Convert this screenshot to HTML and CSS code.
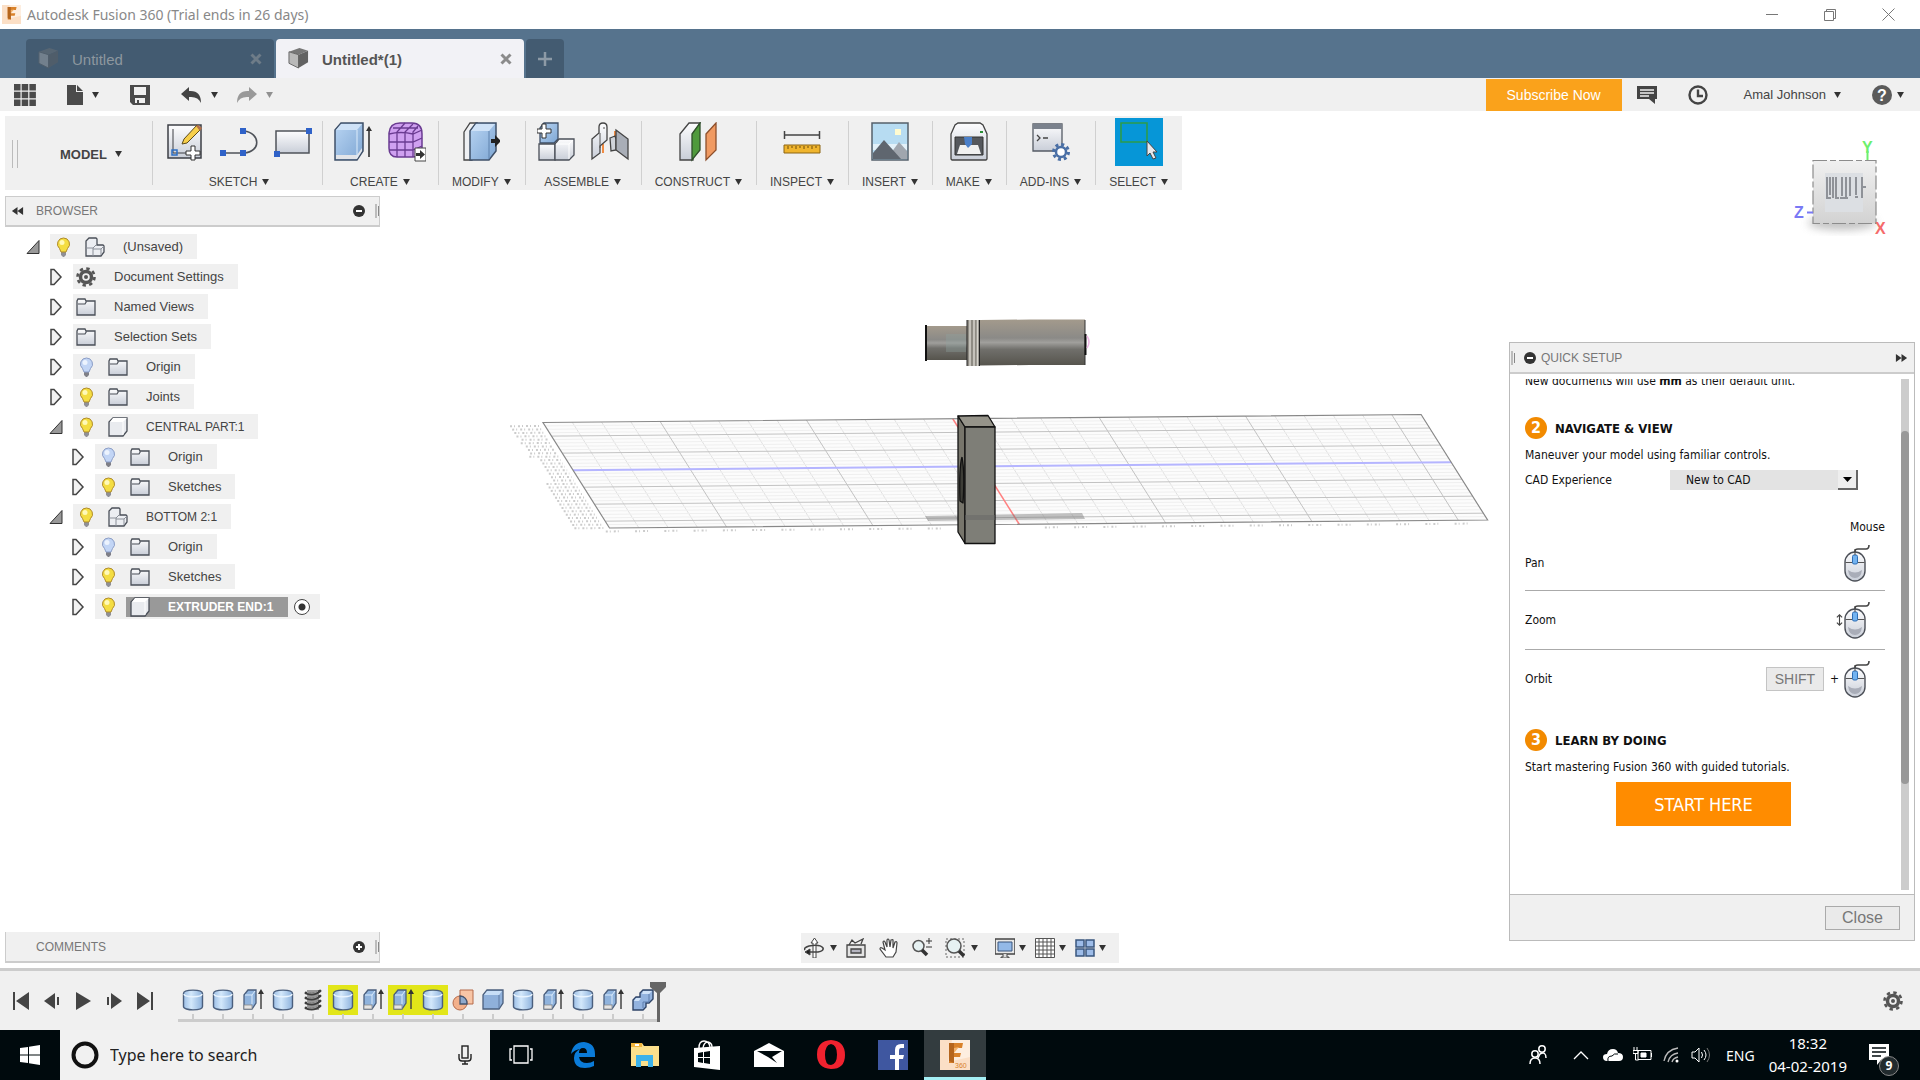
FILE: index.html
```
<!DOCTYPE html>
<html lang="en">
  <head>
    <meta charset="UTF-8" />
    <meta name="viewport" content="width=device-width, initial-scale=1.0" />
    <title>Autodesk Fusion 360</title>
    <link rel="stylesheet" href="styles.css">
  </head>
  <body>
    <!-- shared icons -->
    <svg class="sprite" aria-hidden="true">
      <defs>
        <linearGradient id="blue" x1="0" y1="0" x2="1" y2="1">
          <stop offset="0" stop-color="#b9d5f3" /><stop offset="1" stop-color="#7ea6d3" />
        </linearGradient>
        <linearGradient id="cyl" x1="0" x2="1">
          <stop offset="0" stop-color="#9dbfe6" /><stop offset=".4" stop-color="#d3e8fb" /><stop offset="1" stop-color="#8db2dd" />
        </linearGradient>
        <linearGradient id="grey" x1="0" y1="0" x2="0" y2="1">
          <stop offset="0" stop-color="#fdfdfe" /><stop offset="1" stop-color="#c9ced8" />
        </linearGradient>
        <linearGradient id="steel" x1="0" y1="0" x2="0" y2="1">
          <stop offset="0" stop-color="#a39a8c" /><stop offset=".4" stop-color="#8b8a87" /><stop offset=".5" stop-color="#a09f9c" /><stop offset=".65" stop-color="#706f6b" /><stop offset="1" stop-color="#56544d" />
        </linearGradient>
        <linearGradient id="cube" x1="0" y1="0" x2="0" y2="1">
          <stop offset="0" stop-color="#f0f0f0" /><stop offset="1" stop-color="#d2d2d2" />
        </linearGradient>
      </defs>
      <symbol id="caret" viewBox="0 0 8 7"><path d="M0 0h8L4 7z" fill="#333" /></symbol>
      <symbol id="fusion" viewBox="0 0 30 30">
        <path d="M0 0h30v30H0z" fill="#fbdfc6" /><path d="M12 0h18v17L8 22z" fill="#fdeee0" />
        <path d="M9 3h14l-1 5h-8v5h7l-1 4h-6v6H9z" fill="#d9822b" /><path d="M9 3h5v20l-5-2z" fill="#b5651d" /><path d="M14 8l5-1-5 6z" fill="#f2b26d" />
      </symbol>
      <symbol id="doc-cube" viewBox="0 0 22 22">
        <path d="M1 4l11-4 9 3-10 4z" fill="#777" /><path d="M1 4l10 3v14L1 16z" fill="#b9b9b9" stroke="#666" /><path d="M11 7l10-4v12l-10 6z" fill="#626262" />
      </symbol>
      <symbol id="expand" viewBox="0 0 14 18"><path d="M2 1.500h3L12 9l-7 7.500H2z" fill="#f2f2f2" stroke="#444" stroke-width="1.500" /></symbol>
      <symbol id="collapse" viewBox="0 0 14 18"><path d="M13 2.500v13H1z" fill="#999" stroke="#333" /></symbol>
      <symbol id="bulb-on" viewBox="0 0 20 20">
        <path d="M8 13h5v5l-2 2h-1l-2-2z" fill="#8f8f96" /><path d="M10.500 1a6 6 0 0 1 4 10.500L13 15H8l-1.500-3.500A6 6 0 0 1 10.500 1z" fill="#f4dd42" stroke="#b08b2a" /><circle cx="9" cy="5.500" r="2.500" fill="#fff9b8" />
      </symbol>
      <symbol id="bulb-off" viewBox="0 0 20 20">
        <path d="M8 13h5v5l-2 2h-1l-2-2z" fill="#7f7f86" /><path d="M10.500 1a6 6 0 0 1 4 10.500L13 15H8l-1.500-3.500A6 6 0 0 1 10.500 1z" fill="#c2d5f5" stroke="#8b9dc6" /><circle cx="9" cy="5.500" r="2.500" fill="#ecf3fe" />
      </symbol>
      <symbol id="folder" viewBox="0 0 20 20">
        <path d="M1 18V4l1-2h7l1 2h9v14z" fill="url(#grey)" stroke="#4a4f58" stroke-width="1.300" /><path d="M2 7h7l1.500-2.500" fill="none" stroke="#4a4f58" stroke-width="1.200" />
      </symbol>
      <symbol id="component" viewBox="0 0 20 20">
        <path d="M1 5l4-4h14v13l-4 5H1z" fill="#e9ebef" stroke="#4a4f58" stroke-width="1.300" /><path d="M5 1h14l-4 4H2z" fill="#fff" /><path d="M15 5v13" stroke="#fff" />
      </symbol>
      <symbol id="assembly" viewBox="0 0 20 20">
        <path d="M1 19V4l3-3h7l1 1v6h6l1 1v6l-3 4z" fill="#eceef2" stroke="#4a4f58" stroke-width="1.300" /><path d="M8 19v-8l3-3M1 11h7M8 12h8v6M16 12l3-3" fill="none" stroke="#8a8f98" />
      </symbol>
      <symbol id="gear" viewBox="0 0 20 20">
        <circle cx="10" cy="10" r="8.500" fill="none" stroke="#555" stroke-width="2.600" stroke-dasharray="3.400 3.276" />
        <circle cx="10" cy="10" r="5.500" fill="none" stroke="#555" stroke-width="3.500" /><circle cx="10" cy="10" r="2" fill="#555" />
      </symbol>
      <symbol id="rewind" viewBox="0 0 14 10"><path d="M7 0v10L0 5zM14 0v10L7 5z" fill="#333" /></symbol>
      <symbol id="forward" viewBox="0 0 14 10"><path d="M0 0v10l7-5zM7 0v10l7-5z" fill="#333" /></symbol>
      <symbol id="minus" viewBox="0 0 12 12"><circle cx="6" cy="6" r="6" fill="#333" /><path d="M3 6h6" stroke="#fff" stroke-width="2" /></symbol>
      <symbol id="plus" viewBox="0 0 12 12"><circle cx="6" cy="6" r="6" fill="#333" /><path d="M3 6h6M6 3v6" stroke="#fff" stroke-width="2" /></symbol>
      <symbol id="grip" viewBox="0 0 4 16"><path d="M1 1v14M3.500 3v10" stroke="#888" /></symbol>
      <symbol id="t-cyl" viewBox="0 0 22 22">
        <path d="M1.500 4.500C1.500 0 20.500 0 20.500 4.500v13c0 4.500-19 4.500-19 0z" fill="url(#cyl)" stroke="#4b5f7d" stroke-width="1.400" /><path d="M2 5c0 3.500 18 3.500 18 0" fill="none" stroke="#e9f4fe" stroke-width="1.500" />
      </symbol>
      <symbol id="t-extrude" viewBox="0 0 22 22">
        <path d="M2 6l4-5h8v13l-4 6H2z" fill="#8fb3dd" stroke="#4b5f7d" stroke-width="1.300" /><path d="M2 16h8v4H2z" fill="#e4e4e4" stroke="#888" stroke-width=".8" /><path d="M3 6h7v9M10 6l3-4" fill="none" stroke="#dcecfc" /><path d="M19 20V3" stroke="#444" stroke-width="1.500" /><path d="M16 5l3-5 3 5z" fill="#333" />
      </symbol>
      <symbol id="t-thread" viewBox="0 0 22 22">
        <path d="M5 1h12v20H5z" fill="#999" /><path d="M4 4q8 3 14-2M4 9q8 3 14-2M4 14q8 3 14-2M4 19q8 3 14-2" fill="none" stroke="#3d3d3d" stroke-width="2.800" stroke-linecap="round" /><path d="M5 3.500q7 2 11-1.500M5 8.500q7 2 11-1.500M5 13.500q7 2 11-1.500M5 18.500q7 2 11-1.500" fill="none" stroke="#aaa" />
      </symbol>
      <symbol id="t-plane" viewBox="0 0 22 22">
        <path d="M8 1h13v14H8z" fill="#f8c5a6" stroke="#b56b4b" /><circle cx="8" cy="14" r="7" fill="#f3b08b" stroke="#b56b4b" /><path d="M8 7a7 7 0 0 1 7 8H8z" fill="#8fa9cc" stroke="#44546e" stroke-width="1.300" />
      </symbol>
      <symbol id="t-box" viewBox="0 0 22 22">
        <path d="M1 6l4-5h16v13l-4 6H1z" fill="#8fb0da" stroke="#4b5f7d" stroke-width="1.300" /><path d="M5 2h15l-3 4H2z" fill="#c8def6" /><path d="M17 6v13" stroke="#5e7ba3" />
      </symbol>
      <symbol id="t-combine" viewBox="0 0 22 22">
        <path d="M1 11l3-3h4V4l3-3h10v9l-4 4h-3v4l-3 3H1z" fill="#93b3df" stroke="#2f4467" stroke-width="1.400" /><path d="M11 2h9l-3 3h-7zM4 9h5l-2 3H2z" fill="#cfe2f8" /><path d="M17 5v8h-6v6" fill="none" stroke="#5c7dab" />
      </symbol>
      <symbol id="mouse" viewBox="0 0 28 38">
        <path d="M12 18V7q0-2 3-2h8q3 0 3-4" fill="none" stroke="#444" stroke-width="1.600" />
        <rect x="2" y="8" width="20" height="29" rx="10" fill="url(#grey)" stroke="#4b4f57" stroke-width="1.400" /><path d="M2.500 18.500h19" stroke="#555" />
        <path d="M5 26q7 5 14 0-1 8-7 8t-7-8" fill="#a9adb8" />
        <rect x="9.500" y="11" width="5" height="9" rx="1.500" fill="#73b3f0" stroke="#2e6eb5" /><path d="M12 5v6" stroke="#444" />
      </symbol>
    </svg>

    <header class="titlebar">
      <svg class="app-logo"><use href="#fusion" /></svg>
      <span class="app-title">Autodesk Fusion 360 (Trial ends in 26 days)</span>
      <button class="win-btn" aria-label="Minimize"><svg width="12" height="12"><path d="M0 5.500h12" stroke="#777" /></svg></button>
      <button class="win-btn" aria-label="Restore"><svg width="12" height="12" fill="none" stroke="#777"><path d="M.5 2.500h9v9h-9zM2.500 2.500v-2h9v9h-2" /></svg></button>
      <button class="win-btn" aria-label="Close window"><svg width="13" height="13"><path d="M.5 .5l12 12M12.500 .5l-12 12" stroke="#777" /></svg></button>
    </header>

    <div class="tabs">
      <div class="tab">
        <svg class="tab-icon"><use href="#doc-cube" /></svg>
        <button class="tab-name">Untitled</button>
        <button class="tab-close" aria-label="Close Untitled"><svg width="12" height="12"><path d="M1.500 1.500l9 9M10.500 1.500l-9 9" stroke="currentColor" stroke-width="3" /></svg></button>
      </div>
      <div class="tab active">
        <svg class="tab-icon"><use href="#doc-cube" /></svg>
        <button class="tab-name">Untitled*(1)</button>
        <button class="tab-close" aria-label="Close Untitled*(1)"><svg width="12" height="12"><path d="M1.500 1.500l9 9M10.500 1.500l-9 9" stroke="currentColor" stroke-width="3" /></svg></button>
      </div>
      <button class="tab-new" aria-label="New tab"><svg width="14" height="14"><path d="M7 0v14M0 7h14" stroke="#8d9aa6" stroke-width="2.500" /></svg></button>
    </div>

    <div class="quickbar">
      <button class="quick-btn grid-btn" aria-label="Data panel"><svg width="22" height="22" fill="#4b4b4b"><path d="M0 0h6.500v6.500H0zM7.700 0h6.500v6.500H7.700zM15.400 0h6.500v6.500h-6.500zM0 7.700h6.500v6.500H0zM7.700 7.700h6.500v6.500H7.700zM15.400 7.700h6.500v6.500h-6.500zM0 15.400h6.500v6.500H0zM7.700 15.400h6.500v6.500H7.700zM15.400 15.400h6.500v6.500h-6.500z" /></svg></button>
      <button class="quick-btn file-btn" aria-label="File"><svg width="18" height="20"><path d="M1 0h9v7h7v13H1zM11 0l6 6h-6z" fill="#4b4b4b" /></svg><svg class="caret"><use href="#caret" /></svg></button>
      <button class="quick-btn save-btn" aria-label="Save"><svg width="20" height="20"><path fill-rule="evenodd" d="M0 0h20v20H3l-3-3zM4 2v8h12V2zM5 13v5h10v-5zM7 15h2v3H7z" fill="#4b4b4b" /></svg></button>
      <button class="quick-btn undo-btn" aria-label="Undo"><svg width="21" height="16"><path d="M8 0v4q12-1 12 12-3-7-12-6v4L0 7z" fill="#444" /></svg><svg class="caret"><use href="#caret" /></svg></button>
      <button class="quick-btn redo-btn" aria-label="Redo"><svg width="21" height="16"><path d="M13 0v4Q1 3 1 16q3-7 12-6v4l8-7z" fill="#444" /></svg><svg class="caret"><use href="#caret" /></svg></button>
      <a class="subscribe" href="#">Subscribe Now</a>
      <button class="quick-btn" aria-label="Notifications"><svg width="20" height="20"><path d="M0 1h20v13h-2v5l-6-5H0z" fill="#444" /><path d="M3 5h14M3 8h14M3 11h9" stroke="#f0f0f0" stroke-width="1.400" /></svg></button>
      <button class="quick-btn job-btn" aria-label="Job status"><svg width="20" height="20" fill="none" stroke="#444" stroke-width="2.400"><circle cx="10" cy="10" r="8.500" /><path d="M10 4.500V11h5" /></svg></button>
      <button class="quick-btn user-btn">Amal Johnson <svg class="caret"><use href="#caret" /></svg></button>
      <button class="quick-btn help-btn" aria-label="Help"><svg width="20" height="20"><circle cx="10" cy="10" r="10" fill="#5b5b5b" /><text x="10" y="16" text-anchor="middle" font-family="Liberation Sans" font-weight="bold" font-size="16" fill="#fff">?</text></svg><svg class="caret"><use href="#caret" /></svg></button>
    </div>

    <main class="workspace">
      <svg class="scene" viewBox="0 111 1920 857" preserveAspectRatio="xMidYMid slice" aria-hidden="true">
        <!-- ground grid, one unit = one cell -->
        <g class="ground" transform="matrix(29.27 -.267 2.145 3.403 543 422.500)">
          <path d="M0 0h30v31H0z" class="plane" />
          <path class="minor" d="M1 0v31M2 0v31M3 0v31M5 0v31M6 0v31M7 0v31M8 0v31M10 0v31M11 0v31M12 0v31M13 0v31M15 0v31M16 0v31M17 0v31M18 0v31M20 0v31M21 0v31M22 0v31M23 0v31M25 0v31M26 0v31M27 0v31M28 0v31" />
          <path class="minor faint" d="M0 1h30M0 2h30M0 3h30M0 5h30M0 6h30M0 7h30M0 8h30M0 10h30M0 11h30M0 12h30M0 13h30M0 15h30M0 16h30M0 17h30M0 18h30M0 20h30M0 21h30M0 22h30M0 23h30M0 25h30M0 26h30M0 27h30M0 28h30M0 30h30" />
          <path class="major" d="M4 0v31M9 0v31M19 0v31M24 0v31M29 0v31M0 4h30M0 9h30M0 19h30M0 24h30M0 29h30" />
          <path class="axis-x" d="M14 0v31" />
          <path class="axis-z" d="M0 14h30" />
          <path class="edge" d="M0 0h30v31H0z" />
          <path class="ticks" d="M-1.200 1h1M-1.200 2h1M-1.200 3h1M-1.200 4h1M-1.100 5h.9M-1.200 6h1M-1.100 7h.9M-1.100 8h.9M-1.100 9h.9M-1.200 10h1M-.9 11h.7M-.9 12h.7M-.9 13h.7M-.9 14h.7M-.9 15h.7M-.9 16h.7M-.9 17h.7M-1.200 18h1M-1.200 19h1M-1.200 20h1M-1.200 21h1M-1.200 22h1M-1.200 23h1M-1.200 24h1M-1.200 25h1M-1.200 26h1M-1.200 27h1M-1.200 28h1M-1.200 29h1M-1.200 30h1M-1.200 31h1" />
          <path class="ticks" d="M-.2 32h.5M.8 32h.5M1.800 32h.5M2.800 32h.5M3.800 32h.5M4.800 32h.5M5.800 32h.5M6.800 32h.5M7.800 32h.5M8.800 32h.5M9.800 32h.5M10.800 32h.5M14.800 32h.5M15.800 32h.5M16.800 32h.5M17.800 32h.5M18.800 32h.5M19.800 32h.5M20.800 32h.5M21.800 32h.5M22.800 32h.5M23.800 32h.5M24.800 32h.5M25.800 32h.5M26.800 32h.5M27.800 32h.5M28.800 32h.5" />
        </g>
        <path d="M925 516l157-3 3 6-157 2z" fill="#777" opacity=".45" />
        <!-- extruder end -->
        <path d="M925 326h42v34h-42z" fill="url(#steel)" /><path d="M946 334h20v18h-20z" fill="#8fa3a0" opacity=".35" />
        <path d="M926 325v36" stroke="#111" stroke-width="2" />
        <path d="M967 320h13v46h-13z" fill="#8e8b83" /><path d="M970 320v46M974 320v46M977.500 320v46" stroke="#d6d4cd" stroke-width="1.500" />
        <path d="M967 320v46M979.500 320v46" stroke="#222" />
        <path d="M980 320l50-.5h55V365h-55l-50 .5z" fill="url(#steel)" /><path d="M1085 320v45" stroke="#333" /><path d="M1085.500 334v21" stroke="#111" stroke-width="2" />
        <path d="M1087 336q4 6 0 12" fill="none" stroke="#efb8e6" stroke-width="1.500" />
        <!-- central part -->
        <g stroke="#111" stroke-width="1.300" stroke-linejoin="round">
          <path d="M958 416l7 11v116.500l-7-11.500z" fill="#77756b" />
          <path d="M958 416l30-.5 7 11.500h-30z" fill="#96948a" />
          <path d="M965 427h30v116.500h-30z" fill="#7e7e77" />
          <path d="M962 457q-3 10-2 44l3 2q2-30-1-46" fill="#3d3d37" />
        </g>
        <path d="M965 515h30v5h-30z" fill="#666" opacity=".5" />
      </svg>

      <svg class="viewcube" width="94" height="104" viewBox="1794 132 94 104" aria-label="View cube">
        <ellipse cx="1842" cy="223" rx="34" ry="7" class="cube-shadow" />
        <path d="M1867.500 161v-10" stroke="#6df06d" stroke-width="2" />
        <path d="M1813 160.500h63v63h-63z" fill="url(#cube)" stroke="#8c8c8c" stroke-width="1.200" stroke-dasharray="14 3 6 3" />
        <path d="M1825 173h38v39h-38z" fill="#dcdfe3" />
        <path d="M1827 177v21M1830 177v18M1833 177v21M1836 177v20M1842 177v19M1846 177v21M1850 177v19M1856 177v18M1862 177v21" stroke="#8f9298" stroke-width="2" /><path d="M1826 198h5M1835 198h4M1840 198h8M1855 197h3M1863 187h3" stroke="#8f9298" stroke-width="2" />
        <path d="M1807 212.500h6" stroke="#7979f5" stroke-width="2" />
        <g class="axis-label"><text x="1862" y="153" fill="#6df06d">Y</text><text x="1794" y="218" fill="#7979f5">Z</text><text x="1875" y="234" fill="#f56b6b">X</text></g>
      </svg>

      <nav class="toolbar" aria-label="Tools">
        <button class="model-btn"><span class="handle"></span>MODEL <svg class="caret"><use href="#caret" /></svg></button>
        <div class="group sketch-group">
          <div class="tools">
            <button class="tool" aria-label="Create sketch"><svg viewBox="0 0 38 40">
              <path d="M2 3h33v33H2z" fill="url(#grey)" stroke="#3c3f45" stroke-width="1.500" /><path d="M7 7v24h20" fill="none" stroke="#3c3f45" /><path d="M6 28h5v5H6z" fill="none" stroke="#2e6fc4" stroke-width="1.500" />
              <path d="M18 17L31 3l4 4-14 14-5 1z" fill="#f7cf4b" stroke="#5c4a1a" /><path d="M30 4l2-1 4 3-2 3z" fill="#b06f4a" /><path d="M29 24v5h5v4h-5v5h-4v-5h-5v-4h5v-5z" fill="#fff" stroke="#333" />
            </svg></button>
            <button class="tool" aria-label="Line"><svg viewBox="0 0 38 40"><path d="M4 31h20c17-1 17-20 0-22" fill="none" stroke="#4f535a" stroke-width="1.600" /><path d="M0 28h6v6H0zM20 28h6v6h-6zM20 6h6v6h-6z" fill="#2f62c8" /></svg></button>
            <button class="tool" aria-label="Rectangle"><svg viewBox="0 0 38 40"><path d="M2 9h33v22H2z" fill="url(#grey)" stroke="#4f535a" stroke-width="1.500" /><path d="M0 29h6v6H0zM32 6h6v6h-6z" fill="#2f62c8" /></svg></button>
          </div>
          <button class="group-name">SKETCH <svg class="caret"><use href="#caret" /></svg></button>
        </div>
        <div class="group">
          <div class="tools">
            <button class="tool" aria-label="Extrude"><svg viewBox="0 0 38 40"><path d="M1 8l6-7h22v28l-6 9H1z" fill="url(#blue)" stroke="#3f5068" stroke-width="1.500" /><path d="M2 33h21l5-7v3l-5 8H2z" fill="#e2e4e8" /><path d="M7 2h21l-5 6H2z" fill="#cfe2f7" /><path d="M23 8v28" stroke="#dcecfb" /><path d="M35 35V6" stroke="#333" stroke-width="1.600" /><path d="M32 9l3-5 3 5z" fill="#333" /></svg></button>
            <button class="tool" aria-label="Create form"><svg viewBox="0 0 38 40"><path d="M1 11Q2 1 12 1h12q10 0 10 11v14q0 9-9 9H9q-8 0-8-9z" fill="#cfa0f0" stroke="#6a3b91" stroke-width="1.500" /><path d="M1 12q12-3 24 0l9-4M1 20h24l9-4M1 28h24l9-4M9 35V10l8-9M17 35V10l8-8M25 35V10l5-6M5 6h25" fill="none" stroke="#6a3b91" stroke-width="1.300" /><path d="M27 26h11v13H27z" fill="#fff" stroke="#444" /><path d="M28 31h4v-3l5 4.500-5 4.500v-3h-4z" fill="#333" /></svg></button>
          </div>
          <button class="group-name">CREATE <svg class="caret"><use href="#caret" /></svg></button>
        </div>
        <div class="group">
          <div class="tools">
            <button class="tool" aria-label="Press pull"><svg viewBox="0 0 38 40"><path d="M2 10l6-9h7l-5 9v28H2z" fill="#eef0f3" stroke="#444" stroke-width="1.300" /><path d="M8 9l6-8h20v28l-7 9H8z" fill="url(#blue)" stroke="#3f5068" stroke-width="1.500" /><path d="M14 2h19l-6 7H9z" fill="#cfe2f7" /><path d="M27 9v28" stroke="#5f82ad" /><path d="M29 17h4v-4l6 6-6 6v-4h-4z" fill="#222" /></svg></button>
          </div>
          <button class="group-name">MODIFY <svg class="caret"><use href="#caret" /></svg></button>
        </div>
        <div class="group">
          <div class="tools">
            <button class="tool" aria-label="New component"><svg viewBox="0 0 38 40"><path d="M3 21V6l4-5h14v16l-4 4z" fill="url(#blue)" stroke="#3f5068" stroke-width="1.300" /><path d="M2 22h16v16H2z" fill="url(#grey)" stroke="#4a4f58" stroke-width="1.300" /><path d="M18 22l4-5h15v16l-5 5H18z" fill="url(#grey)" stroke="#4a4f58" stroke-width="1.300" /><path d="M19 22h13v15M32 22l4-4" fill="none" stroke="#fff" /><path d="M9 2v5h5v4H9v5H5v-5H0V7h5V2z" fill="#fff" stroke="#333" /></svg></button>
            <button class="tool" aria-label="Joint"><svg viewBox="0 0 38 40"><path d="M12 22v9M24 9v8" stroke="#f08030" stroke-width="1.800" /><path d="M1 17l7-6V5q0-4 4-4t4 4v13l-7 6v7l-8 6z" fill="url(#grey)" stroke="#444" stroke-width="1.300" /><path d="M9 11v15M13 5v2" stroke="#555" /><path d="M19 16l5-2 1 3v11l-5 1z" fill="#d0d4da" stroke="#444" stroke-width="1.300" /><path d="M25 8l12 9v20l-12-9z" fill="#a9aeb7" stroke="#444" stroke-width="1.300" /></svg></button>
          </div>
          <button class="group-name">ASSEMBLE <svg class="caret"><use href="#caret" /></svg></button>
        </div>
        <div class="group">
          <div class="tools">
            <button class="tool" aria-label="Offset plane"><svg viewBox="0 0 38 40"><path d="M1 12l9-11h11l-7 11v26H1z" fill="url(#grey)" stroke="#444" stroke-width="1.300" /><path d="M13 12l8-11v27l-8 10z" fill="#4f9a3c" stroke="#2f4f2a" stroke-width="1.300" /><path d="M27 12l10-11v27L27 38z" fill="#f09a62" stroke="#8d4f2c" stroke-width="1.300" /></svg></button>
          </div>
          <button class="group-name">CONSTRUCT <svg class="caret"><use href="#caret" /></svg></button>
        </div>
        <div class="group">
          <div class="tools">
            <button class="tool" aria-label="Measure"><svg viewBox="0 0 38 40"><path d="M1 13h36M1.500 9v8M36.500 9v8" stroke="#444" stroke-width="1.500" /><path d="M1 23h36v8H1z" fill="#f0b52e" stroke="#8c6412" /><path d="M5 24v3M9 24v2M13 24v3M17 24v2M21 24v3M25 24v2M29 24v3M33 24v2" stroke="#6f4c0b" /></svg></button>
          </div>
          <button class="group-name">INSPECT <svg class="caret"><use href="#caret" /></svg></button>
        </div>
        <div class="group">
          <div class="tools">
            <button class="tool" aria-label="Insert decal"><svg viewBox="0 0 38 40"><path d="M1 1h36v37H1z" fill="#b7dcf2" stroke="#55606b" stroke-width="1.500" /><path d="M2 22h34v6H2z" fill="#e3f1f9" /><path d="M24 7h6v6h-6z" fill="#fffbd0" /><path d="M20 31l8-11 8 9v8H20z" fill="#a0a6ae" /><path d="M2 31l11-13 17 19H2z" fill="#5f666f" /></svg></button>
          </div>
          <button class="group-name">INSERT <svg class="caret"><use href="#caret" /></svg></button>
        </div>
        <div class="group">
          <div class="tools">
            <button class="tool" aria-label="3D print"><svg viewBox="0 0 38 40"><path d="M1 12l4-9 3-2h22l3 2 4 9v25l-1 1H2l-1-1z" fill="url(#grey)" stroke="#444" stroke-width="1.300" /><path d="M5 15h28v18H5z" fill="#55585d" stroke="#333" /><path d="M10 23h18l3 9H7z" fill="#f0f0f0" /><path d="M14 15h8v7l-4 4-3-4z" fill="#4a7fc9" /><path d="M30 10h3" stroke="#2a8f35" stroke-width="2" /></svg></button>
          </div>
          <button class="group-name">MAKE <svg class="caret"><use href="#caret" /></svg></button>
        </div>
        <div class="group">
          <div class="tools">
            <button class="tool" aria-label="Scripts and add-ins"><svg viewBox="0 0 38 40"><path d="M1 2h29v27H1z" fill="url(#grey)" stroke="#555b64" stroke-width="1.300" /><path d="M1 2h29v5H1z" fill="#7b828d" /><path d="M5 13l3 3-3 3M11 16h5" fill="none" stroke="#444" stroke-width="1.300" /><circle cx="29" cy="30" r="7.500" fill="none" stroke="#4a6fa5" stroke-width="3" stroke-dasharray="3 2.890" /><circle cx="29" cy="30" r="5" fill="#fff" stroke="#4a6fa5" stroke-width="2.500" /></svg></button>
          </div>
          <button class="group-name">ADD-INS <svg class="caret"><use href="#caret" /></svg></button>
        </div>
        <div class="group">
          <div class="tools">
            <button class="tool selected" aria-label="Select"><svg viewBox="0 0 48 48"><path d="M6 5h26v19H6z" fill="none" stroke="#2c9c4b" stroke-width="1.600" /><path d="M32 23v15l3-3 3 6 3-1-3-6h4z" fill="#e8e8ec" stroke="#444" /></svg></button>
          </div>
          <button class="group-name">SELECT <svg class="caret"><use href="#caret" /></svg></button>
        </div>
      </nav>

      <div class="panels">
        <div class="left-side">
          <section class="browser">
            <div class="panel-head">
              <svg class="arrows"><use href="#rewind" /></svg><h2>BROWSER</h2>
              <button class="dot-btn" aria-label="Collapse browser"><svg><use href="#minus" /></svg></button><svg class="grip"><use href="#grip" /></svg>
            </div>
            <ul class="tree">
              <li><button class="twist" aria-label="Collapse"><svg><use href="#collapse" /></svg></button><span class="node"><svg><use href="#bulb-on" /></svg><svg><use href="#assembly" /></svg><span>(Unsaved)</span></span></li>
              <li class="l1"><button class="twist" aria-label="Expand"><svg><use href="#expand" /></svg></button><span class="node"><svg><use href="#gear" /></svg><span>Document Settings</span></span></li>
              <li class="l1"><button class="twist" aria-label="Expand"><svg><use href="#expand" /></svg></button><span class="node"><svg><use href="#folder" /></svg><span>Named Views</span></span></li>
              <li class="l1"><button class="twist" aria-label="Expand"><svg><use href="#expand" /></svg></button><span class="node"><svg><use href="#folder" /></svg><span>Selection Sets</span></span></li>
              <li class="l1"><button class="twist" aria-label="Expand"><svg><use href="#expand" /></svg></button><span class="node"><svg><use href="#bulb-off" /></svg><svg><use href="#folder" /></svg><span>Origin</span></span></li>
              <li class="l1"><button class="twist" aria-label="Expand"><svg><use href="#expand" /></svg></button><span class="node"><svg><use href="#bulb-on" /></svg><svg><use href="#folder" /></svg><span>Joints</span></span></li>
              <li class="l1"><button class="twist" aria-label="Collapse"><svg><use href="#collapse" /></svg></button><span class="node part"><svg><use href="#bulb-on" /></svg><svg><use href="#component" /></svg><span>CENTRAL PART:1</span></span></li>
              <li class="l2"><button class="twist" aria-label="Expand"><svg><use href="#expand" /></svg></button><span class="node"><svg><use href="#bulb-off" /></svg><svg><use href="#folder" /></svg><span>Origin</span></span></li>
              <li class="l2"><button class="twist" aria-label="Expand"><svg><use href="#expand" /></svg></button><span class="node"><svg><use href="#bulb-on" /></svg><svg><use href="#folder" /></svg><span>Sketches</span></span></li>
              <li class="l1"><button class="twist" aria-label="Collapse"><svg><use href="#collapse" /></svg></button><span class="node part"><svg><use href="#bulb-on" /></svg><svg><use href="#assembly" /></svg><span>BOTTOM 2:1</span></span></li>
              <li class="l2"><button class="twist" aria-label="Expand"><svg><use href="#expand" /></svg></button><span class="node"><svg><use href="#bulb-off" /></svg><svg><use href="#folder" /></svg><span>Origin</span></span></li>
              <li class="l2"><button class="twist" aria-label="Expand"><svg><use href="#expand" /></svg></button><span class="node"><svg><use href="#bulb-on" /></svg><svg><use href="#folder" /></svg><span>Sketches</span></span></li>
              <li class="l2"><button class="twist" aria-label="Expand"><svg><use href="#expand" /></svg></button><span class="node part current"><svg><use href="#bulb-on" /></svg><span class="picked"><svg><use href="#component" /></svg><span>EXTRUDER END:1</span></span><input type="radio" aria-label="Activate component" checked></span></li>
            </ul>
          </section>
          <section class="panel-head comments">
            <h2>COMMENTS</h2>
            <button class="dot-btn" aria-label="Add comment"><svg><use href="#plus" /></svg></button><svg class="grip"><use href="#grip" /></svg>
          </section>
        </div>

        <nav class="navbar" aria-label="Navigation">
          <button class="wide" aria-label="Orbit"><svg viewBox="0 0 20 20" fill="none" stroke="#444"><path d="M9 20V5H7l3.500-5L14 5h-2v15z" fill="#fff" /><path d="M5 14h9q6-1 5-4-3-4-14-2-6 2-4 4" stroke-width="1.600" /><path d="M1 14l5-3v6z" fill="#222" /></svg><svg class="caret"><use href="#caret" /></svg></button>
          <button class="plain" aria-label="Look at"><svg viewBox="0 0 20 20" fill="none" stroke="#444" stroke-width="1.300"><path d="M1 7h18v12H1z" fill="#e4e4e4" /><path d="M5 11h10v4H5z" fill="#b5b5c0" /><path d="M3 7l3-5 3 3 8-4-2 5" /></svg></button>
          <button class="plain" aria-label="Pan"><svg viewBox="0 0 20 20"><path d="M7 19l-6-8q0-2 2-1l3 2-2-8q1-2 2 0l2 5V2q1-2 2 0l1 7 1-7q2-1 2 0v8l2-6q2-1 2 1l-1 9-3 5z" fill="#fff" stroke="#444" stroke-width="1.200" /></svg></button>
          <button class="plain" aria-label="Zoom"><svg viewBox="0 0 20 20"><circle cx="6.500" cy="8" r="5.500" fill="#e6f1f2" stroke="#555" stroke-width="1.500" /><path d="M10 12l5 5" stroke="#333" stroke-width="3.500" /><path d="M14 3h6M17 0v6M14 9h6" stroke="#333" /></svg></button>
          <button class="wide fit-btn" aria-label="Fit"><svg viewBox="0 0 20 20"><path d="M1 1h18v18H1z" fill="none" stroke="#666" stroke-dasharray="2 2" /><circle cx="9" cy="8" r="7" fill="#e6f1f2" stroke="#555" stroke-width="1.500" /><path d="M14 13l5 5" stroke="#333" stroke-width="3.500" /></svg><svg class="caret"><use href="#caret" /></svg></button>
          <button aria-label="Display settings"><svg viewBox="0 0 20 20"><path d="M0 1h20v15H0z" fill="#e8e8e8" stroke="#444" stroke-width="1.500" /><path d="M3 4h14v9H3z" fill="#93b9e8" stroke="#39557d" /><path d="M8 16v3H6v1h8v-1h-2v-3" fill="#ddd" stroke="#444" /></svg><svg class="caret"><use href="#caret" /></svg></button>
          <button aria-label="Grid and snaps"><svg viewBox="0 0 20 20"><path d="M.5 .5h19v19H.5zM4 0v20M8 0v20M12 0v20M16 0v20M0 4h20M0 8h20M0 12h20M0 16h20" fill="#fff" stroke="#555" /></svg><svg class="caret"><use href="#caret" /></svg></button>
          <button aria-label="Viewports"><svg viewBox="0 0 20 20"><path d="M1 2h8v7H1zM11 2h8v7h-8zM1 11h8v7H1zM11 11h8v7h-8z" fill="#9dbce8" stroke="#39557d" stroke-width="1.500" /></svg><svg class="caret"><use href="#caret" /></svg></button>
        </nav>

        <section class="setup">
          <div class="setup-head">
            <svg class="grip"><use href="#grip" /></svg><button class="dot-btn" aria-label="Collapse quick setup"><svg><use href="#minus" /></svg></button>
            <h2>QUICK SETUP</h2><svg class="arrows"><use href="#forward" /></svg>
          </div>
          <div class="setup-body">
            <div class="setup-scroll">
              <p class="units">New documents will use <b>mm</b> as their default unit.</p>
              <h3><span class="step">2</span>NAVIGATE &amp; VIEW</h3>
              <p>Maneuver your model using familiar controls.</p>
              <div class="field">
                <label for="cad">CAD Experience</label>
                <span class="picker"><select id="cad"><option>New to CAD</option></select><svg width="20" height="20"><path d="M0 0h20v20H0z" fill="#eee" /><path d="M19 0v19H0" fill="none" stroke="#666" stroke-width="2" /><path d="M5 7h9l-4.500 5z" /></svg></span>
              </div>
              <table>
                <tr><th></th><th>Mouse</th></tr>
                <tr><td>Pan</td><td><div class="keys"><svg class="mouse"><use href="#mouse" /></svg></div></td></tr>
                <tr><td>Zoom</td><td><div class="keys"><svg class="updown" viewBox="0 0 8 14"><path d="M4 1v12M1 4l3-3 3 3M1 10l3 3 3-3" fill="none" stroke="#444" stroke-width="1.300" /></svg><svg class="mouse"><use href="#mouse" /></svg></div></td></tr>
                <tr><td>Orbit</td><td><div class="keys"><kbd>SHIFT</kbd><span class="and">+</span><svg class="mouse"><use href="#mouse" /></svg></div></td></tr>
              </table>
              <h3 class="learn"><span class="step">3</span>LEARN BY DOING</h3>
              <p>Start mastering Fusion 360 with guided tutorials.</p>
              <button class="start">START HERE</button>
            </div>
            <div class="scrollbar"><div class="thumb"></div></div>
          </div>
          <div class="setup-foot"><button>Close</button></div>
        </section>
      </div>
    </main>

    <section class="timeline" aria-label="Timeline">
      <div class="playback">
        <button aria-label="To start"><svg viewBox="0 0 16 18"><path d="M0 0h2v18H0zM16 0v18L3 9z" /></svg></button>
        <button aria-label="Step back"><svg viewBox="0 0 16 18"><path d="M11 1v16L0 9zM13 5h2v8h-2z" /></svg></button>
        <button aria-label="Play"><svg viewBox="0 0 16 18"><path d="M1 0l15 9L1 18z" /></svg></button>
        <button aria-label="Step forward"><svg viewBox="0 0 16 18"><path d="M5 1v16l11-8zM1 5h2v8H1z" /></svg></button>
        <button aria-label="To end"><svg viewBox="0 0 16 18"><path d="M14 0h2v18h-2zM0 0v18l13-9z" /></svg></button>
      </div>
      <ol class="features">
        <li><svg><use href="#t-cyl" /></svg></li>
        <li><svg><use href="#t-cyl" /></svg></li>
        <li><svg><use href="#t-extrude" /></svg></li>
        <li><svg><use href="#t-cyl" /></svg></li>
        <li><svg><use href="#t-thread" /></svg></li>
        <li class="marked"><svg><use href="#t-cyl" /></svg></li>
        <li><svg><use href="#t-extrude" /></svg></li>
        <li class="marked"><svg><use href="#t-extrude" /></svg></li>
        <li class="marked"><svg><use href="#t-cyl" /></svg></li>
        <li><svg><use href="#t-plane" /></svg></li>
        <li><svg><use href="#t-box" /></svg></li>
        <li><svg><use href="#t-cyl" /></svg></li>
        <li><svg><use href="#t-extrude" /></svg></li>
        <li><svg><use href="#t-cyl" /></svg></li>
        <li><svg><use href="#t-extrude" /></svg></li>
        <li><svg><use href="#t-combine" /></svg></li>
      </ol>
      <svg class="marker" viewBox="0 0 16 40"><path d="M0 0h16v5L10 11v29H7V11L0 5z" fill="#666" /></svg>
      <button class="settings" aria-label="Timeline settings"><svg><use href="#gear" /></svg></button>
    </section>

    <footer class="taskbar">
      <button class="start-btn" aria-label="Start"><svg width="20" height="20" fill="#fff"><path d="M0 3l8-1v7.500H0zM9 1.800L20 0v9.500H9zM0 10.500h8V18l-8-1zM9 10.500h11V20L9 18.200z" /></svg></button>
      <div class="search">
        <svg width="28" height="28"><circle cx="14" cy="14" r="11.500" fill="none" stroke="#111" stroke-width="4" /></svg>
        <input type="text" placeholder="Type here to search" aria-label="Search">
        <svg width="14" height="20" fill="none" stroke="#222" stroke-width="1.400"><rect x="4" y="1" width="6" height="12" /><path d="M1 9v4q0 3 3 3h6q3 0 3-3V9M7 16v3M4 19h6" /></svg>
      </div>
      <button class="task" aria-label="Task view"><svg width="24" height="20" fill="none" stroke="#fff" stroke-width="1.300"><path d="M5 1h14v17H5zM3 4H1v11h2M21 4h2v11h-2" /></svg></button>
      <button class="task" aria-label="Edge"><svg width="26" height="26"><path d="M1 12Q3 0 14 0q11 1 11 12v3H9q1 6 8 6 4 0 7-2v5q-4 2-9 2Q4 26 4 16q0-6 6-9-6 1-9 5m8-1h8q0-5-4-5t-4 5" fill="#0a7bd8" /></svg></button>
      <button class="task" aria-label="File Explorer"><svg width="28" height="24"><path d="M0 0h11l2 3h15v20H0z" fill="#fbe08c" /><path d="M0 0h11v4H0z" fill="#f0b43c" /><path d="M4 1h4v2H4z" fill="#fff" /><path d="M5 24V12h17v12h-5v-6h-7v6z" fill="#3cb2ea" /></svg></button>
      <button class="task" aria-label="Store"><svg width="28" height="30"><path d="M1 8l26-2v24L1 27z" fill="#fff" /><path d="M6 8q0-7 5-7t6 6M10 8q1-6 5-6 4 1 4 5" fill="none" stroke="#fff" stroke-width="1.400" /><path d="M5 13l5-1v5H5zM11 12l6-1v6h-6zM5 18h5v5l-5-1zM11 18h6v6l-6-1z" fill="#000a0d" /></svg></button>
      <button class="task" aria-label="Mail"><svg width="30" height="24"><path d="M0 8L15 0l15 8v16H0z" fill="#fff" /><path d="M3 8h25l-10 6 5 6-9-6z" fill="#000a0d" /></svg></button>
      <button class="task" aria-label="Opera"><svg width="30" height="30"><path fill-rule="evenodd" d="M15 0q14 1 14 15T15 29Q1 28 1 14.500 1 1 15 0m0 4q-6 1-6 11t6 10q6-1 6-10.500T15 4" fill="#f0222f" /></svg></button>
      <button class="task" aria-label="Facebook"><svg width="30" height="30"><path d="M0 0h30v30H0z" fill="#3f57a0" /><path d="M17 30V19h-5v-4h5v-5q0-6 6-6h3v4h-3q-2 0-2 3v4h5l-1 4h-4v11z" fill="#fff" /></svg></button>
      <button class="task open" aria-label="Fusion 360"><svg width="30" height="30"><use href="#fusion" /><text x="15" y="28" font-size="7" font-family="Liberation Sans" fill="#d9822b">360</text></svg></button>

      <div class="tray">
        <button aria-label="People"><svg width="18" height="20" fill="none" stroke="#fff" stroke-width="1.500"><circle cx="13" cy="4" r="3.200" /><circle cx="6" cy="9" r="3.200" /><path d="M1 19q0-6 5-6t5 6M9 13l2-4q6-3 6 4" /></svg></button>
        <button class="more" aria-label="Show hidden icons"><svg width="16" height="10"><path d="M1 9l7-7 7 7" fill="none" stroke="#fff" stroke-width="1.300" /></svg></button>
        <button aria-label="OneDrive"><svg width="20" height="14"><path d="M4 13q-4 0-4-4 0-3 4-3 1-5 6-5 4 0 5 4 5 0 5 4t-4 4z" fill="#fff" /><path d="M5 13q-1-5 4-5 2-3 6-2" fill="none" stroke="#000a0d" /></svg></button>
        <button aria-label="Battery"><svg width="20" height="16" fill="none" stroke="#fff"><path d="M5 3.500h13v9H5zM18.500 6v4M1 0v3M4 0v3M0 3.500h5v3H0zM2.500 7v6h3" /><path d="M8 6h5v4H8z" fill="#fff" /></svg></button>
        <button aria-label="Network"><svg width="18" height="16" fill="none" stroke="#bbb" stroke-width="1.300"><path d="M1 14Q3 3 15 1M5 15q2-8 10-9M9 15q1-4 6-5" /><circle cx="14" cy="14" r="1.500" fill="#fff" stroke="none" /></svg></button>
        <button aria-label="Volume"><svg width="20" height="18" fill="none" stroke="#fff"><path d="M1 6h3l4-4v14l-4-4H1zM10.500 6q2 3 0 6M13 4q4 5 0 10" /><path d="M16 2q5 7 0 14" stroke="#777" /></svg></button>
        <button class="lang">ENG</button>
        <button class="clock"><time>18:32</time><time>04-02-2019</time></button>
        <button class="notes" aria-label="9 notifications"><svg width="20" height="22"><path d="M0 0h20v16h-8l-4 5v-5H0z" fill="#fff" /><path d="M3 4h14M3 8h14M3 12h9" stroke="#000a0d" stroke-width="1.500" /></svg><span class="badge">9</span></button>
      </div>
    </footer>
  </body>
</html>
```

FILE: styles.css
```
* {
  box-sizing: border-box;
}
body {
  margin: 0;
  height: 100vh;
  display: flex;
  flex-direction: column;
  overflow: hidden;
  background: #fff;
  color: #444;
  font-family: "Liberation Sans", Arial, sans-serif;
  font-size: 13px;
}
button {
  padding: 0;
  border: none;
  background: none;
  color: inherit;
  font: inherit;
  display: flex;
  align-items: center;
  justify-content: center;
}
h2,
h3,
p,
ul,
ol {
  margin: 0;
  padding: 0;
  list-style: none;
}
svg {
  flex: none;
  display: block;
}
.sprite {
  position: absolute;
  width: 0;
  height: 0;
}
.caret {
  width: 7px;
  height: 6px;
}

/* title bar */
.titlebar {
  height: 29px;
  display: flex;
  align-items: center;
  padding: 0 3px 0 2px;
  font-family: "Noto Sans", sans-serif;
  font-size: 14px;
  color: #888;
}
.app-logo {
  width: 19px;
  height: 19px;
}
.app-title {
  flex: 1;
  padding-left: 6px;
}
.win-btn {
  width: 58px;
  height: 28px;
}

/* document tabs */
.tabs {
  height: 49px;
  display: flex;
  align-items: flex-end;
  gap: 2px;
  padding-left: 26px;
  background: #56738d;
}
.tab {
  width: 248px;
  height: 39px;
  display: flex;
  align-items: center;
  padding: 0 12px;
  border-radius: 4px 4px 0 0;
  background: #435b71;
  color: #8d979f;
  font-size: 15px;
}
.tab-icon {
  width: 21px;
  height: 21px;
  opacity: 0.4;
}
.tab-name {
  flex: 1;
  justify-content: flex-start;
  padding: 2px 0 0 13px;
}
.tab-close {
  color: #6e7c88;
}
.tab.active {
  background: #f2f2f6;
  color: #555;
  font-weight: bold;
}
.tab.active .tab-icon {
  opacity: 1;
}
.tab.active .tab-close {
  color: #8b8b8b;
}
.tab-new {
  width: 38px;
  height: 39px;
  border-radius: 4px 4px 0 0;
  background: #435b71;
}

/* quick access bar */
.quickbar {
  height: 33px;
  display: flex;
  align-items: center;
  padding: 0 16px 0 14px;
  background: #f0f0f0;
}
.quick-btn {
  gap: 8px;
}
.file-btn {
  margin-left: 30px;
}
.save-btn {
  margin-left: 31px;
}
.undo-btn,
.redo-btn {
  margin-left: 31px;
  gap: 9px;
}
.redo-btn {
  margin-left: 18px;
  opacity: 0.5;
}
.subscribe {
  margin-left: auto;
  margin-right: 15px;
  width: 136px;
  line-height: 32px;
  text-align: center;
  text-decoration: none;
  background: #faa21b;
  color: #fff;
  font-size: 14px;
}
.job-btn {
  margin-left: 31px;
}
.user-btn {
  margin-left: 36px;
}
.help-btn {
  margin-left: 31px;
  gap: 5px;
}

/* canvas */
.workspace {
  position: relative;
  flex: 1;
  min-height: 0;
  display: flex;
  flex-direction: column;
  gap: 6px;
  padding: 5px;
}
.scene {
  position: absolute;
  inset: 0;
  width: 100%;
  height: 100%;
}
.ground path {
  fill: none;
  vector-effect: non-scaling-stroke;
}
.ground .plane {
  fill: #fcfcfc;
}
.minor {
  stroke: #e0e0e0;
}
.faint {
  stroke: #efefef;
}
.major {
  stroke: #c2c2c2;
}
.axis-x {
  stroke: #ff8080;
  stroke-width: 1.5;
}
.axis-z {
  stroke: #b5b5ff;
  stroke-width: 2;
}
.edge {
  stroke: #888;
  stroke-width: 1.2;
}
.ticks {
  stroke: #ccc;
  stroke-width: 2;
  stroke-dasharray: 2 2 1 3;
}
.viewcube {
  position: absolute;
  top: 21px;
  right: 32px;
}
.cube-shadow {
  fill: #999;
  opacity: 0.6;
  filter: blur(4px);
}
.axis-label {
  font: bold 16px "Liberation Sans", sans-serif;
}

/* main toolbar */
.toolbar {
  position: relative;
  align-self: flex-start;
  height: 74px;
  display: flex;
  background: #f0f0f0;
  color: #444;
  font-size: 12px;
}
.model-btn {
  width: 147px;
  justify-content: flex-start;
  gap: 8px;
  padding: 2px 0 0 7px;
  font-weight: bold;
  font-size: 13px;
}
.handle {
  width: 6px;
  height: 28px;
  margin-right: 34px;
  border: solid #bbb;
  border-width: 0 1px;
}
.group {
  display: flex;
  flex-direction: column;
  align-items: center;
  padding: 2px 12px 0;
  background: linear-gradient(#d0d0d0, #d0d0d0) 0 5px / 1px 64px no-repeat;
}
.sketch-group {
  padding: 2px 10px 0 14px;
}
.tools {
  height: 48px;
  display: flex;
  align-items: center;
  gap: 16px;
}
.tool svg {
  width: 38px;
  height: 40px;
}
.tool.selected {
  background: #0696d7;
}
.tool.selected svg {
  width: 48px;
  height: 48px;
}
.group-name {
  gap: 5px;
  height: 24px;
  padding: 8px 2px 0;
}

/* side panels */
.panels {
  position: relative;
  flex: 1;
  min-height: 0;
  display: grid;
  grid-template-columns: 1fr auto 1fr;
}
.left-side {
  width: 375px;
  display: flex;
  flex-direction: column;
  justify-content: space-between;
}
.panel-head,
.setup-head {
  height: 31px;
  display: flex;
  align-items: center;
  background: #f0f0f0;
  border: 2px solid #ccc;
  border-width: 1px 1px 2px;
  padding-left: 5px;
}
h2 {
  font-size: 12px;
  font-weight: normal;
  color: #777;
}
.panel-head h2 {
  flex: 1;
  padding-left: 12px;
}
.arrows {
  width: 13px;
  height: 8px;
}
.dot-btn svg {
  width: 12px;
  height: 12px;
}
.grip {
  width: 4px;
  height: 16px;
  margin-left: 10px;
}
.panel-head.comments {
  border-top: none;
  padding-left: 18px;
}
.tree {
  display: flex;
  flex-direction: column;
  gap: 5px;
  padding-top: 7px;
}
.tree li {
  display: flex;
  align-items: center;
  gap: 10px;
  padding-left: 21px;
}
.tree .l1 {
  padding-left: 44px;
}
.tree .l2 {
  padding-left: 66px;
}
.twist svg {
  width: 14px;
  height: 18px;
}
.node {
  height: 25px;
  display: flex;
  align-items: center;
  gap: 12px;
  padding: 0 14px 0 3px;
  background: #f0f0f0;
}
.node svg {
  width: 20px;
  height: 20px;
}
.node > span:last-child {
  padding-left: 6px;
}
.node.part {
  font-size: 12px;
}
.node.current {
  padding-right: 10px;
}
.picked {
  height: 20px;
  display: flex;
  align-items: center;
  gap: 18px;
  margin-left: -4px;
  padding: 0 15px 0 4px;
  background: #999;
  color: #fff;
  font-weight: bold;
}
.node input {
  appearance: none;
  width: 16px;
  height: 16px;
  margin: 0 0 0 -6px;
  border: 1px solid #444;
  border-radius: 50%;
  background: radial-gradient(circle, #333 3px, #fff 4px);
}

/* bottom navigation bar */
.navbar {
  align-self: end;
  height: 30px;
  display: flex;
  align-items: center;
  gap: 9px;
  padding: 0 13px 0 3px;
  background: #f0f0f0;
}
.navbar button {
  gap: 4px;
}
.navbar svg {
  width: 20px;
  height: 20px;
}
.navbar .caret {
  width: 7px;
  height: 6px;
}
.navbar .wide {
  gap: 6px;
}
.navbar .plain {
  margin-right: 4px;
}
.navbar .fit-btn {
  margin-right: 8px;
}

/* quick setup */
.setup {
  width: 406px;
  justify-self: end;
  align-self: end;
  margin-bottom: 22px;
  display: flex;
  flex-direction: column;
  border: 1px solid #bbb;
  background: #fff;
  color: #111;
  font-family: "DejaVu Sans Condensed", "DejaVu Sans", sans-serif;
  font-size: 12px;
}
.setup-head {
  border-width: 0 0 2px;
  padding: 0 6px 0 0;
}
.setup-head .grip {
  margin: 0 9px 0 1px;
}
.setup-head h2 {
  flex: 1;
  padding-left: 5px;
  font-family: "Liberation Sans", sans-serif;
}
.setup-body {
  display: flex;
  gap: 16px;
  padding: 5px 5px 4px 15px;
}
.setup-scroll {
  flex: 1;
  overflow: hidden;
  padding-bottom: 64px;
}
.setup p {
  line-height: 16px;
}
.setup .units {
  margin-top: -6px;
}
.setup h3 {
  display: flex;
  align-items: center;
  gap: 8px;
  margin: 28px 0 8px;
  font-size: 13px;
}
.setup .learn {
  margin-top: 21px;
}
.step {
  width: 22px;
  height: 22px;
  line-height: 22px;
  border-radius: 50%;
  background: #f28a00;
  color: #fff;
  font-size: 16px;
  text-align: center;
}
.field {
  display: flex;
  align-items: center;
  margin-top: 7px;
}
.field label {
  width: 145px;
}
.picker {
  width: 188px;
  display: grid;
}
.picker > * {
  grid-area: 1 / 1;
}
.picker svg {
  justify-self: end;
  pointer-events: none;
}
.picker select {
  appearance: none;
  height: 20px;
  padding: 0 16px;
  border: none;
  border-radius: 0;
  background: #e3e3e3;
  color: #111;
  font: inherit;
}
table {
  width: 100%;
  margin-top: 28px;
  border-collapse: collapse;
}
th {
  height: 18px;
  padding: 0;
  font-weight: normal;
  text-align: right;
}
td {
  height: 59px;
  padding: 0;
  border-bottom: 1px solid #aaa;
}
tr:nth-child(2) td {
  height: 54px;
}
tr:last-child td {
  border: none;
}
.keys {
  display: flex;
  align-items: center;
  justify-content: flex-end;
  padding-right: 14px;
}
.mouse {
  width: 28px;
  height: 38px;
}
.updown {
  width: 7px;
  height: 14px;
}
kbd {
  width: 58px;
  line-height: 22px;
  border: 1px solid #c4c4c4;
  background: #eaeaea;
  color: #777;
  font-family: "Liberation Sans", sans-serif;
  font-size: 14px;
  text-align: center;
}
.and {
  padding: 0 4px 0 6px;
}
.start {
  width: 175px;
  height: 44px;
  margin: 7px auto 0 91px;
  background: #ff8c00;
  color: #fff;
  font-size: 18px;
}
.scrollbar {
  width: 8px;
  padding-top: 52px;
  background: #ccc;
}
.thumb {
  height: 353px;
  border-radius: 4px;
  background: #999;
}
.setup-foot {
  height: 46px;
  display: flex;
  align-items: center;
  justify-content: flex-end;
  padding-right: 14px;
  border-top: 1px solid #bbb;
  background: #f0f0f0;
}
.setup-foot button {
  width: 75px;
  height: 24px;
  border: 1px solid #aaa;
  background: #eaeaea;
  color: #777;
  font-family: "Liberation Sans", sans-serif;
  font-size: 16px;
}

/* timeline */
.timeline {
  height: 62px;
  display: flex;
  align-items: flex-start;
  padding: 14px 17px 0 13px;
  border-top: 3px solid #ccc;
  background: #f0f0f0;
}
.playback {
  display: flex;
  gap: 15px;
  padding-top: 7px;
}
.playback svg {
  width: 16px;
  height: 18px;
  fill: #444;
}
.features {
  display: flex;
  margin-left: 25px;
  border-bottom: 3px solid #ccc;
}
.features li {
  width: 30px;
  padding: 4px 4px 8px;
  background: linear-gradient(#ccc, #ccc) center bottom / 2px 5px no-repeat;
}
.features svg {
  width: 22px;
  height: 22px;
}
.features .marked {
  background:
    linear-gradient(#ccc, #ccc) center bottom / 2px 5px no-repeat,
    linear-gradient(#e2e619, #e2e619) 0 0 / 30px 30px no-repeat;
}
.marker {
  width: 16px;
  height: 40px;
  margin-left: -8px;
  margin-top: -3px;
}
.settings {
  margin: 6px 0 0 auto;
}
.settings svg {
  width: 20px;
  height: 20px;
}

/* windows taskbar */
.taskbar {
  height: 50px;
  display: flex;
  background: #000a0d;
  color: #fff;
  font-family: "Noto Sans", sans-serif;
}
.start-btn {
  width: 60px;
}
.search {
  width: 430px;
  display: flex;
  align-items: center;
  gap: 11px;
  padding: 0 18px 0 11px;
  background: #f1f1f1;
}
.search input {
  flex: 1;
  min-width: 0;
  padding: 0;
  border: none;
  background: none;
  font: inherit;
  font-size: 16px;
}
.search input::placeholder {
  color: #222;
}
.task {
  width: 62px;
}
.task.open {
  background: #333c3f;
  border-bottom: 3px solid #a4eff5;
  padding-top: 3px;
}
.tray {
  margin-left: auto;
  display: flex;
  gap: 10px;
  padding-right: 31px;
}
.more {
  padding: 0 4px 0 16px;
}
.lang {
  font-size: 14px;
  padding-left: 5px;
}
.clock {
  flex-direction: column;
  margin: 0 12px 0 4px;
  font-size: 15px;
  line-height: 23px;
}
.notes {
  position: relative;
}
.badge {
  position: absolute;
  left: 10px;
  bottom: 4px;
  width: 20px;
  height: 20px;
  line-height: 18px;
  border: 1px solid #888;
  border-radius: 50%;
  background: #222b2e;
  font-size: 12px;
  font-weight: bold;
}
```
